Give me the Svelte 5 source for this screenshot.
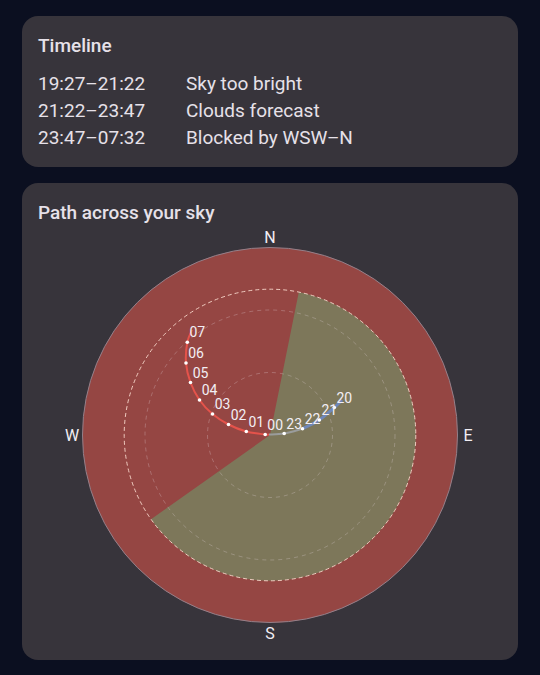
<script>
  const timeline = [
    { time: '19:27–21:22', reason: 'Sky too bright' },
    { time: '21:22–23:47', reason: 'Clouds forecast' },
    { time: '23:47–07:32', reason: 'Blocked by WSW–N' }
  ];

  // chart coordinates are relative to the zenith
  const radius = 187.5;
  const horizon = 145.8;
  const rings = [62.5, 125];

  const hours = [
    { label: '20', x: 64.3, y: -27.5 },
    { label: '21', x: 49.3, y: -15 },
    { label: '22', x: 32.5, y: -6.3 },
    { label: '23', x: 14.2, y: -1.5 },
    { label: '00', x: -4.8, y: -0.5 },
    { label: '01', x: -23.7, y: -3.5 },
    { label: '02', x: -41.5, y: -10.5 },
    { label: '03', x: -57.5, y: -21 },
    { label: '04', x: -70.5, y: -35 },
    { label: '05', x: -79.5, y: -52.5 },
    { label: '06', x: -84, y: -72 },
    { label: '07', x: -82.7, y: -92.7 }
  ];

  const compass = [
    { label: 'N', x: 0, y: -192 },
    { label: 'E', x: 198, y: 6 },
    { label: 'S', x: 0, y: 204 },
    { label: 'W', x: -198, y: 6 }
  ];

  // smooth curve through a run of points
  function curve(points) {
    let d = `M${points[0].x} ${points[0].y}`;
    for (let i = 0; i < points.length - 1; i++) {
      const a = points[i - 1] ?? points[i];
      const b = points[i];
      const c = points[i + 1];
      const e = points[i + 2] ?? c;
      d += ` C${b.x + (c.x - a.x) / 6} ${b.y + (c.y - a.y) / 6}`;
      d += ` ${c.x - (e.x - b.x) / 6} ${c.y - (e.y - b.y) / 6} ${c.x} ${c.y}`;
    }
    return d;
  }

  function onHorizon(bearing) {
    const a = (bearing * Math.PI) / 180;
    return `${horizon * Math.sin(a)} ${-horizon * Math.cos(a)}`;
  }

  const openSky = `M0 0 L${onHorizon(11.4)} A${horizon} ${horizon} 0 1 1 ${onHorizon(234.7)} Z`;
  const brightPath = curve([{ x: 72, y: -35 }, ...hours.slice(0, 3)]);
  const cloudPath = curve([...hours.slice(2, 4), { x: -1, y: -0.4 }]);
  const blockedPath = curve([{ x: -1, y: -0.4 }, ...hours.slice(4), { x: -78, y: -105 }]);
</script>

<main>
  <section class="card">
    <h2>Timeline</h2>
    <table>
      <tbody>
        {#each timeline as row}
          <tr>
            <th scope="row">{row.time}</th>
            <td>{row.reason}</td>
          </tr>
        {/each}
      </tbody>
    </table>
  </section>

  <section class="card">
    <h2>Path across your sky</h2>
    <svg class="sky" viewBox="-232 -209 464 418">
      <circle class="blocked" r={radius} />
      <path class="open" d={openSky} />
      <circle class="edge" r={radius} />
      {#each rings as r}
        <circle class="ring" {r} />
      {/each}
      <circle class="horizon" r={horizon} />

      <path class="path bright" d={brightPath} />
      <path class="path cloudy" d={cloudPath} />
      <path class="path hidden" d={blockedPath} />

      {#each hours as hour}
        <circle class="dot" cx={hour.x} cy={hour.y} r="1.8" />
        <text class="hour" x={hour.x + 10} y={hour.y - 5}>{hour.label}</text>
      {/each}
      {#each compass as point}
        <text class="compass" x={point.x} y={point.y}>{point.label}</text>
      {/each}
    </svg>
  </section>
</main>

<style>
  :global(body) {
    background: #0b0f20;
  }

  main {
    display: flex;
    flex-direction: column;
    gap: 16px;
    padding: 16px 22px;
    font-family: Roboto, sans-serif;
    font-size: 19px;
    line-height: 27px;
    color: #e6e1e9;
  }

  .card {
    padding: 16px;
    border-radius: 16px;
    background: #37343b;
  }

  h2 {
    margin: 0;
    font-size: 19px;
    font-weight: 500;
  }

  table {
    margin-top: 11px;
    border-collapse: collapse;
  }

  th,
  td {
    padding: 0;
    font-weight: 400;
    text-align: left;
  }

  th {
    width: 148px;
  }

  .sky {
    display: block;
    width: 100%;
  }

  .blocked {
    fill: #954643;
  }

  .open {
    fill: #7d775a;
  }

  .edge {
    fill: none;
    stroke: #94808a;
    stroke-width: 1;
  }

  .ring {
    fill: none;
    stroke: #e6d8e0;
    stroke-opacity: 0.28;
    stroke-dasharray: 4 4;
  }

  .horizon {
    fill: none;
    stroke: #f8d8cc;
    stroke-opacity: 0.9;
    stroke-dasharray: 4 3;
  }

  .path {
    fill: none;
    stroke-width: 2;
  }

  .bright {
    stroke: #6f87b8;
    stroke-width: 3;
  }

  .cloudy {
    stroke: #9a9c9c;
  }

  .hidden {
    stroke: #e5534b;
  }

  .dot {
    fill: #ffffff;
  }

  .hour,
  .compass {
    fill: #f2eef4;
    text-anchor: middle;
  }

  .hour {
    font-size: 14px;
  }

  .compass {
    font-size: 16px;
  }
</style>
